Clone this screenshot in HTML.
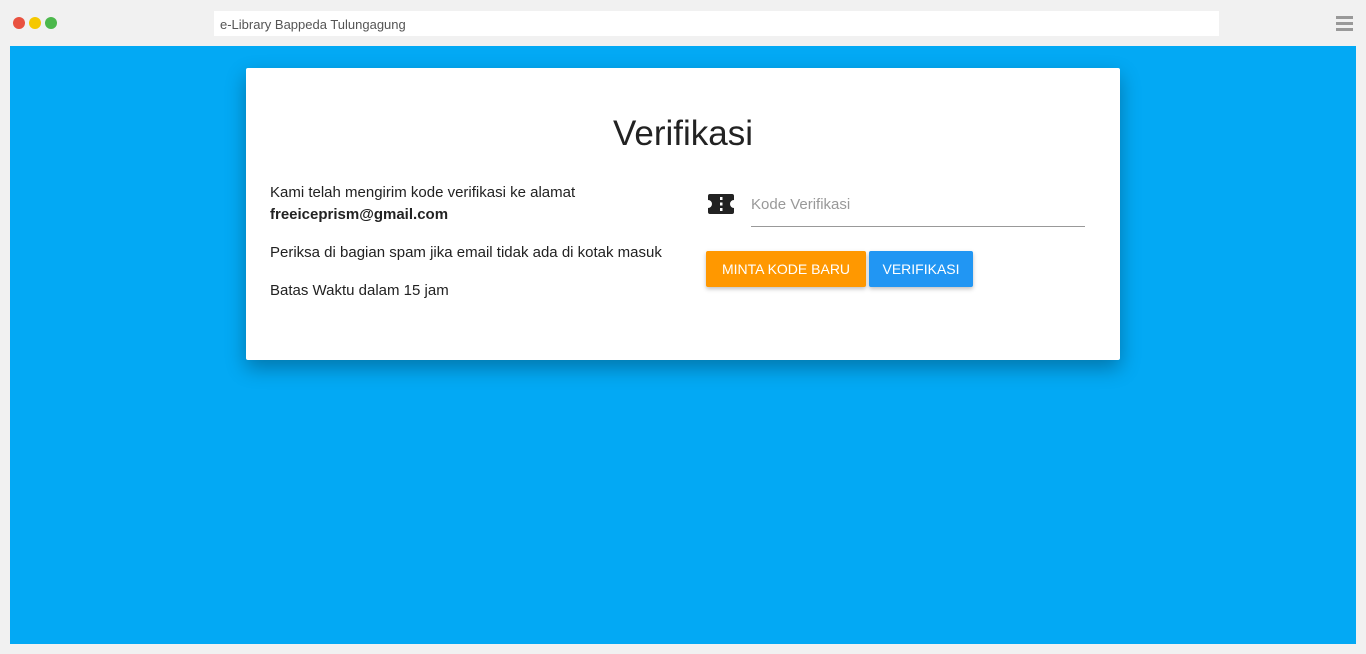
<!DOCTYPE html>
<html><head><meta charset="utf-8"><style>
*{margin:0;padding:0;box-sizing:border-box}
body{width:1366px;height:654px;background:#f1f1f1;font-family:"Liberation Sans",sans-serif;position:relative;overflow:hidden}
.dot{position:absolute;top:17px;width:12px;height:12px;border-radius:50%}
.url{position:absolute;left:214px;top:11px;width:1005px;height:25px;background:#fff;font-size:13px;color:#555;padding:6px 6px;}
.menu{position:absolute;left:1336px;width:17px;height:3px;background:#999}
.main{position:absolute;left:10px;top:46px;width:1346px;height:598px;background:#03a9f4}
.card{position:absolute;left:246px;top:68px;width:874px;height:292px;background:#fff;border-radius:2px;box-shadow:0 8px 20px rgba(0,0,0,.3)}
h1{position:absolute;left:0;right:0;top:46px;text-align:center;font-weight:normal;font-size:35px;color:#222}
.t{position:absolute;left:24px;font-size:15px;color:#222}
.btn{position:absolute;top:183px;height:36px;color:#fff;font-size:14px;text-align:center;line-height:36px;border-radius:2px;box-shadow:0 2px 4px rgba(0,0,0,.25)}
</style></head><body>
<div class="dot" style="left:13px;background:#e9513f"></div>
<div class="dot" style="left:29px;background:#f5c800"></div>
<div class="dot" style="left:45px;background:#4cb84c"></div>
<div class="url">e-Library Bappeda Tulungagung</div>
<div class="menu" style="top:16px"></div><div class="menu" style="top:22px"></div><div class="menu" style="top:28px"></div>
<div class="main"></div>
<div class="card">
<h1>Verifikasi</h1>
<div class="t" style="top:116px">Kami telah mengirim kode verifikasi ke alamat</div>
<div class="t" style="top:138px;font-weight:bold">freeiceprism@gmail.com</div>
<div class="t" style="top:176px">Periksa di bagian spam jika email tidak ada di kotak masuk</div>
<div class="t" style="top:214px">Batas Waktu dalam 15 jam</div>
<svg style="position:absolute;left:462px;top:126px" width="26" height="20" viewBox="0 0 26 20"><path d="M2 0h22a2 2 0 0 1 2 2v4a4 4 0 0 0 0 8v4a2 2 0 0 1-2 2H2a2 2 0 0 1-2-2v-4a4 4 0 0 0 0-8V2a2 2 0 0 1 2-2z" fill="#222"/><rect x="12" y="3" width="2.5" height="3" fill="#fff"/><rect x="12" y="8.5" width="2.5" height="3" fill="#fff"/><rect x="12" y="14" width="2.5" height="3" fill="#fff"/></svg>
<div style="position:absolute;left:505px;top:128px;font-size:15px;color:#999">Kode Verifikasi</div>
<div style="position:absolute;left:505px;top:158px;width:334px;height:1px;background:#999"></div>
<div class="btn" style="left:460px;width:160px;background:#ff9800">MINTA KODE BARU</div>
<div class="btn" style="left:623px;width:104px;background:#2196f3">VERIFIKASI</div>
</div>
</body></html>
